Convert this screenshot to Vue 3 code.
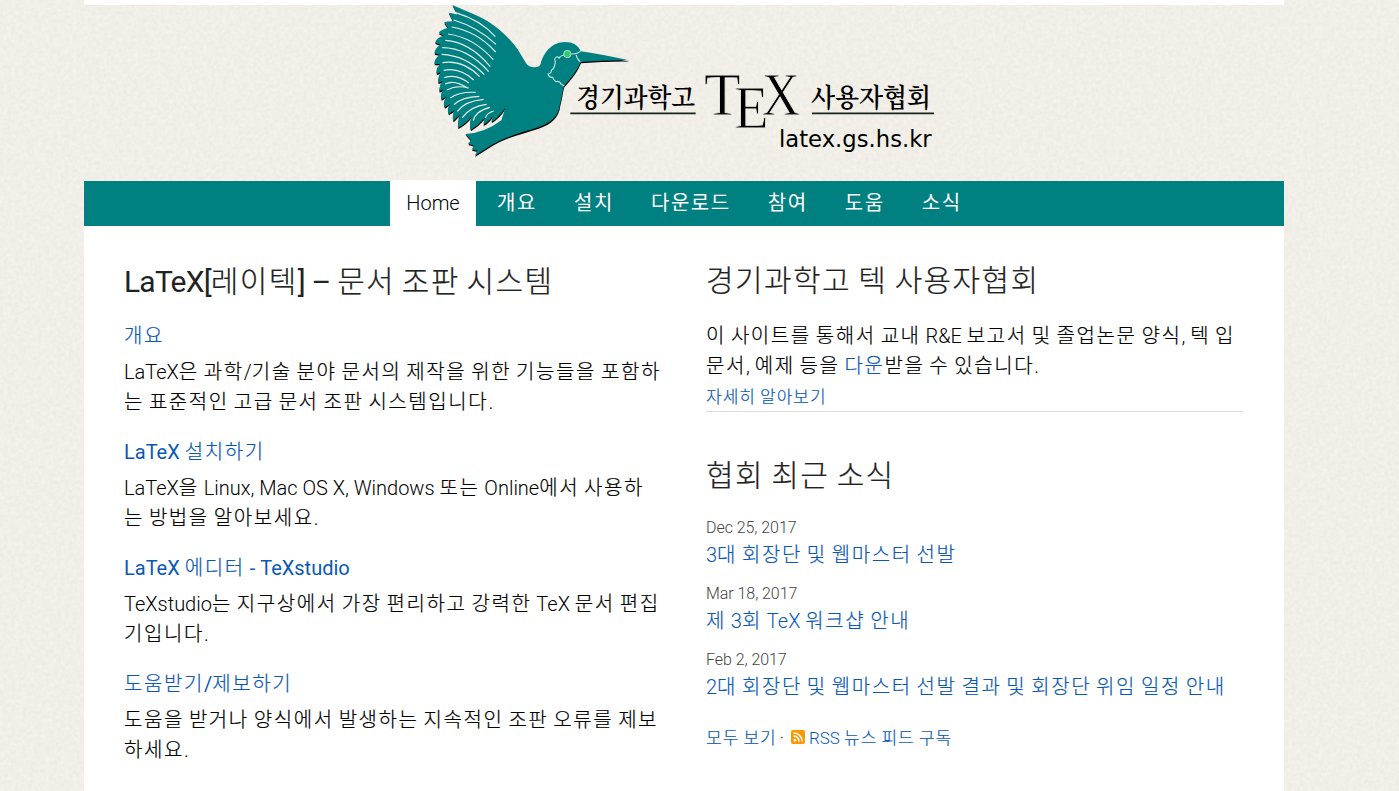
<script setup>
import { h } from 'vue'

// Splits mixed text into Hangul and Latin runs so each can be spaced on its own.
const Mixed = (props) =>
  props.text
    .split(/([가-힣]+)/)
    .filter(Boolean)
    .map((run) => (/[가-힣]/.test(run) ? h('span', { class: 'ko' }, run) : run))
Mixed.props = ['text']

const nav = ['개요', '설치', '다운로드', '참여', '도움', '소식']
const topics = [
  { title: '개요', lines: ['LaTeX은 과학/기술 분야 문서의 제작을 위한 기능들을 포함하', '는 표준적인 고급 문서 조판 시스템입니다.'] },
  { title: 'LaTeX 설치하기', lines: ['LaTeX을 Linux, Mac OS X, Windows 또는 Online에서 사용하', '는 방법을 알아보세요.'] },
  { title: 'LaTeX 에디터 - TeXstudio', lines: ['TeXstudio는 지구상에서 가장 편리하고 강력한 TeX 문서 편집', '기입니다.'] },
  { title: '도움받기/제보하기', lines: ['도움을 받거나 양식에서 발생하는 지속적인 조판 오류를 제보', '하세요.'] }
]
const news = [
  { date: 'Dec 25, 2017', title: '3대 회장단 및 웹마스터 선발' },
  { date: 'Mar 18, 2017', title: '제 3회 TeX 워크샵 안내' },
  { date: 'Feb 2, 2017', title: '2대 회장단 및 웹마스터 선발 결과 및 회장단 위임 일정 안내' }
]
</script>

<template>
  <div class="page">
    <svg class="paper" aria-hidden="true">
      <filter id="grain" x="0" y="0" width="100%" height="100%" color-interpolation-filters="sRGB">
        <feTurbulence type="fractalNoise" baseFrequency="0.26" numOctaves="3" seed="4" />
        <feColorMatrix values="0.045 0 0 0 0.922  0.045 0 0 0 0.912  0.045 0 0 0 0.884  0 0 0 0 1" />
      </filter>
      <rect width="100%" height="100%" filter="url(#grain)" />
    </svg>
    <div class="wrap">
      <div class="strip"></div>
      <header>
        <svg class="logo" viewBox="0 15 1560 480">
          <defs>
            <path id="bird" d="M82 15 L150 44 C210 70 252 112 278 148 L303 190 Q312 202 328 202 Q343 202 347 192 C355 160 378 127 420 126 Q455 126 468 154 Q530 163 612 181 Q540 180 467 186 Q455 218 417 258 C412 274 412 290 405 313 C401 352 375 369 340 382 C280 400 240 412 205 432 L149 467 L157 452 L140 448 L148 437 L129 431 L138 421 L121 402 Q178 400 229 361 L241 323 Q222 352 199 366 L203 348 Q192 366 175 374 L179 354 Q160 376 137 390 Q132 370 139 350 Q122 372 99 383 Q97 362 105 343 L85 363 Q80 350 88 331 L71 342 Q64 328 75 312 L59 322 Q52 308 63 290 L49 298 Q44 284 55 268 L43 274 Q40 260 52 244 L40 248 Q36 235 47 217 L35 221 Q31 206 45 192 L28 192 Q27 177 44 164 L28 160 Q30 144 46 134 L30 128 Q36 112 56 107 L41 99 Q48 88 69 84 L57 67 Q66 64 84 64 L71 38 Q84 40 98 44 Z" />
          </defs>
          <use href="#bird" fill="#000" transform="translate(1 4)" />
          <use href="#bird" fill="#008080" />
          <g class="feathers">
            <path d="M92 38 Q168 61 211 110 M86 60 Q159 82 213 133 M80 81 Q156 94 212 156 M69 102 Q145 112 205 179 M61 121 Q135 126 196 200 M52 143 Q127 143 191 215 M50 163 Q122 166 178 224 M52 188 Q114 178 164 230 M56 211 Q104 201 146 240 M58 233 Q96 220 131 249 M60 252 Q89 238 129 265 M66 270 Q95 254 131 264 M76 294 Q100 275 152 277 M87 314 Q112 290 163 289 M97 334 Q120 303 176 298 M112 353 Q137 318 185 313 M145 362 Q151 333 195 322 M181 354 Q185 339 206 333" />
          </g>
          <path class="face" d="M468 151 Q462 162 439 162 M453 164 Q456 178 466 186 M418 165 Q405 168 403 174 Q393 166 389 178 Q393 185 389 196 Q387 207 379 211 Q380 220 369 222 Q372 233 383 232 Q386 240 393 245 Q404 242 408 252 L418 258" />
          <circle cx="427" cy="162" r="11" fill="#2ecc71" stroke="#d3e9df" stroke-width="2.5" />
          <text class="han" x="454" y="320" textLength="356" lengthAdjust="spacingAndGlyphs">경기과학고</text>
          <text class="han" x="1158" y="320" textLength="360" lengthAdjust="spacingAndGlyphs">사용자협회</text>
          <path d="M436 340 H812 M1161 340 H1527" stroke="#18251f" stroke-width="5" />
          <text class="tex" x="837" y="346" textLength="110" lengthAdjust="spacingAndGlyphs">T</text>
          <text class="tex" x="928" y="383" textLength="103" lengthAdjust="spacingAndGlyphs">E</text>
          <text class="tex" x="1010" y="346" textLength="115" lengthAdjust="spacingAndGlyphs">X</text>
          <text class="url" x="1062" y="440" textLength="458" lengthAdjust="spacingAndGlyphs">latex.gs.hs.kr</text>
        </svg>
      </header>
      <nav>
        <a class="home">Home</a>
        <a v-for="item in nav" :key="item">{{ item }}</a>
      </nav>
      <main>
        <section class="left">
          <h2><Mixed text="LaTeX[레이텍] – 문서 조판 시스템" /></h2>
          <article v-for="topic in topics" :key="topic.title">
            <h3><Mixed :text="topic.title" /></h3>
            <p><span v-for="line in topic.lines" :key="line" class="line"><Mixed :text="line" /></span></p>
          </article>
        </section>
        <section class="right">
          <h2><Mixed text="경기과학고 텍 사용자협회" /></h2>
          <div class="intro">
            <p>
              <span class="line"><Mixed text="이 사이트를 통해서 교내 R&amp;E 보고서 및 졸업논문 양식, 텍 입" /></span>
              <span class="line"><Mixed text="문서, 예제 등을 " /><a><Mixed text="다운" /></a><Mixed text="받을 수 있습니다." /></span>
            </p>
            <a class="more"><Mixed text="자세히 알아보기" /></a>
          </div>
          <h2><Mixed text="협회 최근 소식" /></h2>
          <ul>
            <li v-for="item in news" :key="item.date">
              <time>{{ item.date }}</time>
              <a><Mixed :text="item.title" /></a>
            </li>
          </ul>
          <div class="feed">
            <a><Mixed text="모두 보기" /></a><span class="dot">·</span>
            <svg class="rss" viewBox="0 0 14 14">
              <rect width="14" height="14" rx="2" fill="#ff9800" />
              <circle cx="3.9" cy="10.3" r="1.35" fill="#fff" />
              <path d="M2.6 6.1 A5.2 5.2 0 0 1 8 11.6 M2.6 3 A8.4 8.4 0 0 1 11.2 11.6" fill="none" stroke="#fff" stroke-width="1.6" />
            </svg>
            <a><Mixed text="RSS 뉴스 피드 구독" /></a>
          </div>
        </section>
      </main>
    </div>
  </div>
</template>

<style>
body {
  background: #f1eee7;
  overflow: hidden;
}
</style>

<style scoped>
.page {
  position: relative;
  height: 791px;
  overflow: hidden;
  font-family: Roboto, "Noto Sans CJK KR", sans-serif;
  font-weight: 300;
  font-size: 20px;
  color: #000;
  white-space: nowrap;
}
.paper {
  position: absolute;
  inset: 0;
  width: 100%;
  height: 100%;
}
.wrap {
  position: relative;
  width: 1200px;
  margin-left: 84px;
}
.strip {
  height: 5px;
  background: #fff;
}
header {
  height: 176px;
}
.logo {
  display: block;
  width: 520px;
  height: 160px;
  margin-left: 341px;
}
.feathers path,
.face {
  fill: none;
  stroke: #e4f1ec;
  stroke-width: 3.5;
}
.face {
  stroke: #c4e2dc;
}
.han {
  font-family: "Noto Serif CJK KR", "Noto Sans CJK KR", serif;
  font-size: 77px;
  font-weight: 600;
}
.tex {
  font-family: "Liberation Serif", serif;
  font-size: 181px;
  font-weight: 400;
  stroke: #f1eee7;
  stroke-width: 2.6;
}
.url {
  font-family: "DejaVu Sans", sans-serif;
  font-size: 70px;
  font-weight: 400;
}
nav {
  display: flex;
  height: 45px;
  padding-left: 306px;
  background: #008080;
}
nav a {
  color: #fff;
  line-height: 44px;
  letter-spacing: 1.57px;
  font-weight: 400;
  margin-right: 37px;
}
nav .home {
  width: 86px;
  height: 46px;
  margin: -1px 21px 0 0;
  background: #fff;
  color: #000;
  text-align: center;
  line-height: 46px;
  letter-spacing: 0;
  font-weight: 300;
}
main {
  display: flex;
  gap: 46px;
  height: 565px;
  padding: 0 40px;
  background: #fff;
}
.left {
  width: 536px;
}
.right {
  width: 537px;
}
h2,
h3,
p,
ul {
  margin: 0;
  padding: 0;
}
:deep(.ko) {
  font-weight: 300;
  letter-spacing: 1.6px;
  -webkit-text-stroke: 0.2px currentColor;
}
h2 {
  padding-top: 36px;
  font-size: 30px;
  font-weight: 450;
  line-height: 40px;
  letter-spacing: -0.8px;
  color: #222;
}
h2 :deep(.ko) {
  letter-spacing: 1.4px;
}
.right h2 {
  padding-top: 35px;
  font-weight: 300;
  letter-spacing: 0;
}
article {
  height: 116px;
}
article:first-of-type {
  padding-top: 18px;
}
h3 {
  font-size: 20px;
  font-weight: 450;
  line-height: 32px;
  color: #0a58b5;
}
a {
  color: #0a58b5;
}
p {
  padding-top: 5px;
  line-height: 30px;
}
.line {
  display: block;
}
.intro {
  height: 90px;
  padding-top: 20px;
  border-bottom: 1px solid #ddd;
}
.intro p {
  padding-top: 0;
}
.more {
  display: block;
  font-size: 17px;
  line-height: 32px;
}
.more :deep(.ko),
.feed :deep(.ko) {
  letter-spacing: 1px;
}
.right .intro + h2 {
  padding-top: 44px;
}
ul {
  padding-top: 19px;
  list-style: none;
}
li {
  height: 66px;
}
time {
  display: block;
  font-size: 16px;
  line-height: 26px;
  letter-spacing: -0.05px;
  color: #444;
}
li a {
  display: block;
  line-height: 28px;
}
.feed {
  display: flex;
  align-items: center;
  height: 30px;
  margin-top: 8px;
  font-size: 17px;
}
.dot {
  margin: 2px 7px 0 3px;
}
.rss {
  width: 14px;
  height: 14px;
  margin: 2px 4px 0 0;
}
</style>
